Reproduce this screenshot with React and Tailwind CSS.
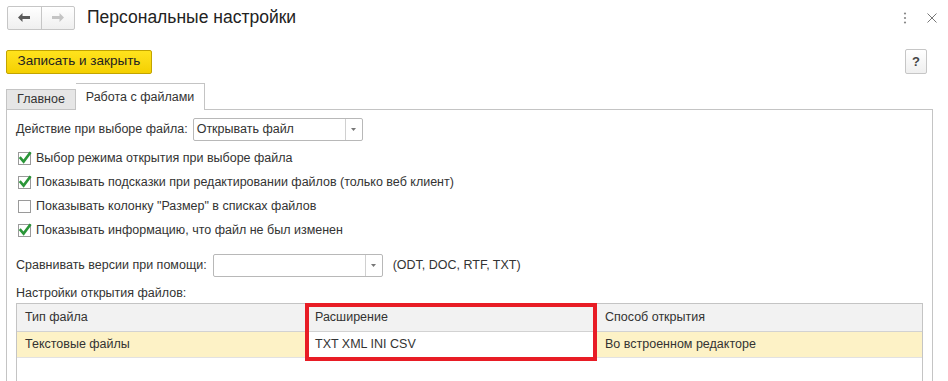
import React from 'react';

function Check({ checked }) {
  return (
    <svg width="16" height="16" viewBox="0 0 16 16" className="shrink-0">
      <rect x="1.5" y="2.5" width="12" height="12" fill="#fff" stroke="#9a9a9a" />
      {checked && (
        <path d="M3.6 8.2 L6.6 11.6 L12.8 3.2" fill="none" stroke="#2a9638" strokeWidth="2.6" strokeLinecap="square" />
      )}
    </svg>
  );
}

function Select({ value, width }) {
  return (
    <div className={`flex h-[23px] border border-[#b8b8b8] rounded-[2px] bg-white ${width}`}>
      <div className="flex-1 flex items-center pl-[3px] text-[12.5px] text-[#333]">{value}</div>
      <div className="w-[17px] border-l border-[#d0d0d0] flex items-center justify-center">
        <svg width="5" height="3" viewBox="0 0 5 3"><path d="M0 0 H5 L2.5 3 Z" fill="#777" /></svg>
      </div>
    </div>
  );
}

const options = [
  { label: 'Выбор режима открытия при выборе файла', checked: true },
  { label: 'Показывать подсказки при редактировании файлов (только веб клиент)', checked: true },
  { label: 'Показывать колонку "Размер" в списках файлов', checked: false },
  { label: 'Показывать информацию, что файл не был изменен', checked: true },
];

export default function App() {
  return (
    <div className="w-[948px] h-[381px] overflow-hidden bg-white text-[#333] font-['Liberation_Sans',Arial,sans-serif]">
      {/* Title bar */}
      <div className="flex items-center h-[35px] pl-[7px] pr-[11px]">
        <div className="flex h-[24px] w-[68px] border border-[#c6c6c6] rounded-[2px] bg-gradient-to-b from-white to-[#efefef]">
          <div className="flex-1 flex items-center justify-center border-r border-[#c6c6c6]">
            <svg width="12" height="9" viewBox="0 0 12 9"><path d="M0 4.5 L4.5 0 V3 H12 V6 H4.5 V9 Z" fill="#5a5a5a" /></svg>
          </div>
          <div className="flex-1 flex items-center justify-center">
            <svg width="12" height="9" viewBox="0 0 12 9"><path d="M12 4.5 L7.5 0 V3 H0 V6 H7.5 V9 Z" fill="#c4c4c4" /></svg>
          </div>
        </div>
        <div className="ml-[12px] text-[17.5px] text-[#222]">Персональные настройки</div>
        <div className="flex-1" />
        <svg width="4" height="12" viewBox="0 0 4 12" className="mr-[20px]">
          <circle cx="2" cy="1.5" r="1.1" fill="#888" />
          <circle cx="2" cy="6" r="1.1" fill="#888" />
          <circle cx="2" cy="10.5" r="1.1" fill="#888" />
        </svg>
        <svg width="10" height="10" viewBox="0 0 10 10">
          <path d="M0.5 0.5 L9.5 9.5 M9.5 0.5 L0.5 9.5" stroke="#777" strokeWidth="1" />
        </svg>
      </div>

      {/* Command bar */}
      <div className="flex items-center mt-[14px] pl-[6px] pr-[21px]">
        <button className="h-[24px] w-[146px] border border-[#c2a400] rounded-[2px] bg-gradient-to-b from-[#ffe31c] to-[#f4d000] text-[13.5px] text-[#222]">
          Записать и закрыть
        </button>
        <div className="flex-1" />
        <button className="h-[25px] w-[22px] border border-[#c6c6c6] rounded-[2px] bg-gradient-to-b from-white to-[#efefef] text-[13px] font-bold text-[#444]">
          ?
        </button>
      </div>

      {/* Tabs */}
      <div className="flex items-end mt-[9px] pl-[6px]">
        <div className="h-[20px] w-[70px] flex items-center justify-center bg-[#e6e6e6] border border-b-0 border-[#c4c4c4] text-[12.5px]">
          Главное
        </div>
        <div className="relative z-10 -mb-px h-[27px] w-[129px] flex items-center justify-center bg-white border border-b-0 border-l-0 border-[#c4c4c4] text-[12.5px]">
          Работа с файлами
        </div>
      </div>

      {/* Panel */}
      <div className="ml-[6px] w-[927px] h-[300px] border border-b-0 border-[#c4c4c4] pl-[9px] pt-[8px]">
        <div className="flex items-center gap-[5px]">
          <span className="text-[12.5px]">Действие при выборе файла:</span>
          <Select value="Открывать файл" width="w-[170px]" />
        </div>

        <div className="flex flex-col mt-[5px]">
          {options.map((o) => (
            <div key={o.label} className="flex items-center h-[24px] gap-[3px] ml-[1px]">
              <Check checked={o.checked} />
              <span className="text-[12.5px]">{o.label}</span>
            </div>
          ))}
        </div>

        <div className="flex items-center mt-[12px]">
          <span className="text-[12.5px] mr-[6px]">Сравнивать версии при помощи:</span>
          <Select value="" width="w-[170px]" />
          <span className="text-[12.5px] ml-[10px]">(ODT, DOC, RTF, TXT)</span>
        </div>

        <div className="text-[12.5px] mt-[8px] leading-[16px]">Настройки открытия файлов:</div>

        {/* Table */}
        <div className="relative mt-[2px] w-[907px] h-[80px] border border-b-0 border-[#c4c4c4] text-[12.5px]">
          <div className="flex h-[28px] bg-[#f2f2f2] border-b border-[#d2d2d2]">
            <div className="w-[289px] flex items-center pl-[8px] border-r border-[#dcdcdc]">Тип файла</div>
            <div className="w-[291px] flex items-center pl-[9px] border-r border-[#dcdcdc]">Расширение</div>
            <div className="flex-1 flex items-center pl-[8px]">Способ открытия</div>
          </div>
          <div className="flex h-[26px] border-b border-[#e2e2e2]">
            <div className="w-[289px] flex items-center pl-[8px] bg-[#fdf2c6]">Текстовые файлы</div>
            <div className="w-[291px] flex items-center pl-[9px] bg-white">TXT XML INI CSV</div>
            <div className="flex-1 flex items-center pl-[8px] bg-[#fdf2c6]">Во встроенном редакторе</div>
          </div>
          {/* highlight frame over the "Расширение" column */}
          <div className="absolute left-[288px] top-[-1px] w-[292px] h-[58px] border-4 border-[#e81c25]" />
        </div>
      </div>
    </div>
  );
}
